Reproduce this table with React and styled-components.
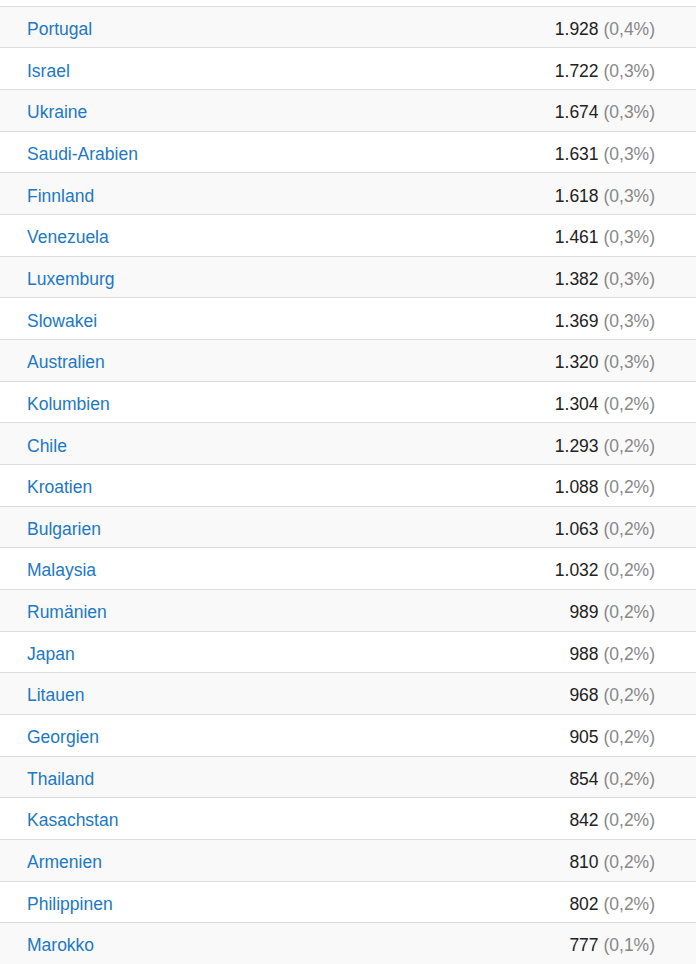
import React from "react";
import styled, { createGlobalStyle } from "styled-components";

const GlobalStyle = createGlobalStyle`
  body {
    margin: 0;
    background: #ffffff;
    font-family: "Liberation Sans", Arial, sans-serif;
  }
`;

const Wrapper = styled.div`
  padding-top: 5.75px;
  width: 696px;
`;

const Table = styled.table`
  width: 100%;
  border-collapse: collapse;
  font-size: 17.5px;
  line-height: 25px;
`;

const Row = styled.tr`
  background: ${(p) => (p.$striped ? "#f9f9f9" : "#ffffff")};
`;

const Cell = styled.td`
  padding: 10.2px 0 5.48px;
  border-top: 1px solid #dddddd;
  vertical-align: top;
`;

const NameCell = styled(Cell)`
  padding-left: 27px;
`;

const ValueCell = styled(Cell)`
  text-align: right;
  padding-right: 41px;
  color: #222222;
  white-space: nowrap;
`;

const Country = styled.a`
  color: #2178c4;
  text-decoration: none;
`;

const Share = styled.span`
  color: #888888;
`;

const countries = [
  ["Portugal", "1.928", "0,4%"],
  ["Israel", "1.722", "0,3%"],
  ["Ukraine", "1.674", "0,3%"],
  ["Saudi-Arabien", "1.631", "0,3%"],
  ["Finnland", "1.618", "0,3%"],
  ["Venezuela", "1.461", "0,3%"],
  ["Luxemburg", "1.382", "0,3%"],
  ["Slowakei", "1.369", "0,3%"],
  ["Australien", "1.320", "0,3%"],
  ["Kolumbien", "1.304", "0,2%"],
  ["Chile", "1.293", "0,2%"],
  ["Kroatien", "1.088", "0,2%"],
  ["Bulgarien", "1.063", "0,2%"],
  ["Malaysia", "1.032", "0,2%"],
  ["Rumänien", "989", "0,2%"],
  ["Japan", "988", "0,2%"],
  ["Litauen", "968", "0,2%"],
  ["Georgien", "905", "0,2%"],
  ["Thailand", "854", "0,2%"],
  ["Kasachstan", "842", "0,2%"],
  ["Armenien", "810", "0,2%"],
  ["Philippinen", "802", "0,2%"],
  ["Marokko", "777", "0,1%"],
];

export default function App() {
  return (
    <Wrapper>
      <GlobalStyle />
      <Table>
        <tbody>
          {countries.map(([name, count, share], i) => (
            <Row key={name} $striped={i % 2 === 0}>
              <NameCell>
                <Country href="#">{name}</Country>
              </NameCell>
              <ValueCell>
                {count} <Share>({share})</Share>
              </ValueCell>
            </Row>
          ))}
        </tbody>
      </Table>
    </Wrapper>
  );
}
